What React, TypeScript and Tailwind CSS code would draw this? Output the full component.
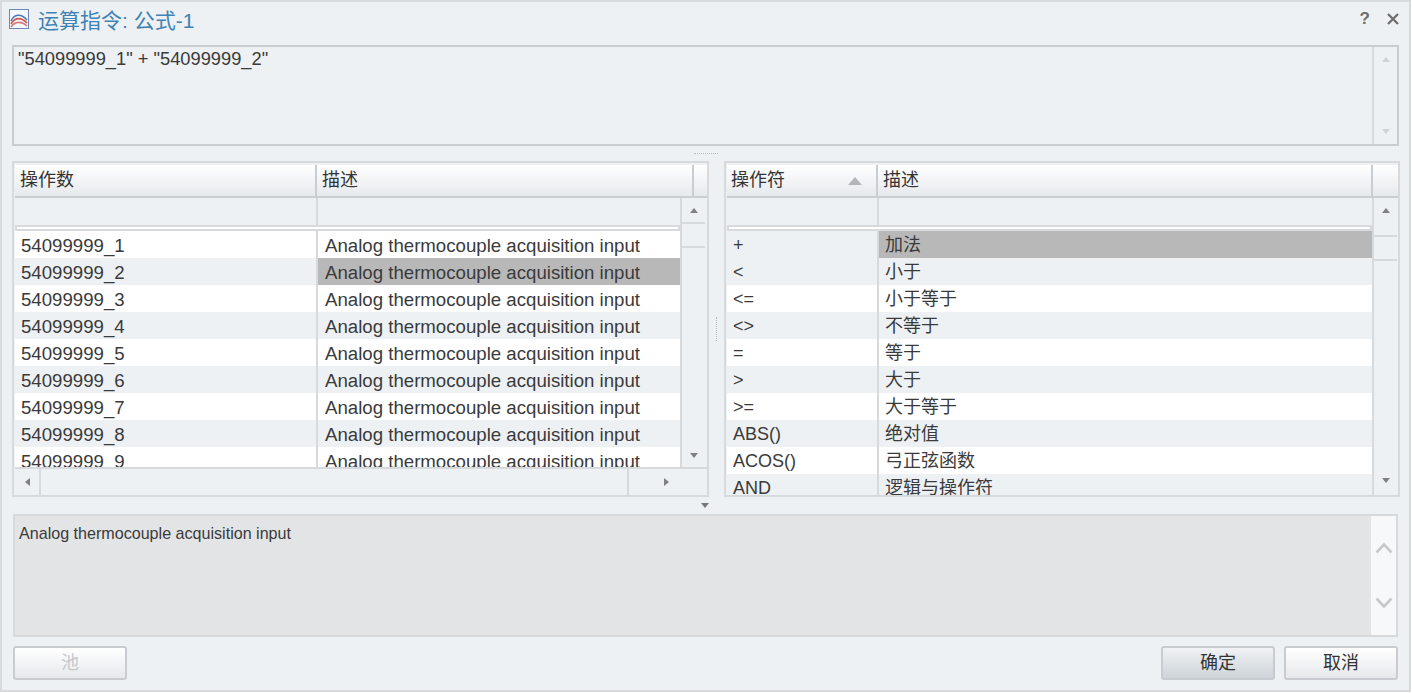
const SANS = "font-['Liberation_Sans','Noto_Sans_CJK_SC',sans-serif]";

function Tri({ dir, className }: { dir: "up" | "down" | "left" | "right"; className: string }) {
  const pts = { up: "0,6 5,0 10,6", down: "0,0 10,0 5,6", left: "6,0 6,10 0,5", right: "0,0 0,10 6,5" }[dir];
  const w = dir === "up" || dir === "down" ? 10 : 6;
  const h = dir === "up" || dir === "down" ? 6 : 10;
  return (
    <svg viewBox={`0 0 ${w} ${h}`} preserveAspectRatio="none" className={className}>
      <polygon points={pts} fill="currentColor" />
    </svg>
  );
}

function HeaderCell({ label, w, sort, pad = "pl-[5px]" }: { label?: string; w: string; sort?: boolean; pad?: string }) {
  return (
    <div className={`${w} h-full shrink-0 flex items-center justify-between ${pad} pr-[14px] border-r-2 border-[#c9ced3] text-[18px] text-[#333] bg-gradient-to-b from-white to-[#e6e9ed]`}>
      <span>{label}</span>
      {sort && <Tri dir="up" className="w-[14px] h-[8px] text-[#b4b7ba]" />}
    </div>
  );
}

function ScrollCol({ thumbTop, thumbH, downPad }: { thumbTop: string; thumbH: string; downPad: string }) {
  return (
    <div className="w-[25px] shrink-0 flex flex-col border-l-2 border-[#d6dadd]">
      <div className={`${thumbTop} flex items-start pt-[10px] justify-center border-b-2 border-[#d6dadd] shrink-0`}>
        <Tri dir="up" className="w-[8px] h-[5px] text-[#808080]" />
      </div>
      <div className={`${thumbH} border-b-2 border-[#d6dadd] shrink-0`} />
      <div className={`flex-1 flex items-end justify-center ${downPad}`}>
        <Tri dir="down" className="w-[8px] h-[5px] text-[#808080]" />
      </div>
    </div>
  );
}

function Row({ a, b, i, selected, col1, font, bPad }: { a: string; b: string; i: number; selected: boolean; col1: string; font: string; bPad: string }) {
  const base = i % 2 === 0 ? "bg-white" : "bg-[#edf1f4]";
  return (
    <div className={`flex h-[27px] shrink-0 text-[#3a3a3a] leading-[29px] ${font}`}>
      <div className={`${col1} shrink-0 whitespace-nowrap pl-[6px] ${selected ? "bg-[#edf1f4]" : base}`}>{a}</div>
      <div className="w-[2px] shrink-0 bg-[#d6dadd]" />
      <div className={`flex-1 whitespace-nowrap ${bPad} ${selected ? "bg-[#b8b8b8]" : base}`}>{b}</div>
    </div>
  );
}

const leftRows = [1, 2, 3, 4, 5, 6, 7, 8, 9].map((n) => `54099999_${n}`);
const rightRows = [
  ["+", "加法"], ["<", "小于"], ["<=", "小于等于"], ["<>", "不等于"], ["=", "等于"],
  [">", "大于"], [">=", "大于等于"], ["ABS()", "绝对值"], ["ACOS()", "弓正弦函数"], ["AND", "逻辑与操作符"],
];

function FilterRow({ col1 }: { col1: string }) {
  return (
    <>
      <div className="flex h-[27px] shrink-0">
        <div className={`${col1} shrink-0`} />
        <div className="w-[2px] shrink-0 bg-[#d6dadd]" />
        <div className="flex-1" />
      </div>
      <div className="h-[6px] shrink-0 bg-white border-y-2 border-x-2 border-[#d6dadd]" />
    </>
  );
}

function Btn({ label, className }: { label: string; className: string }) {
  return (
    <div className={`w-[114px] h-[34px] flex items-center justify-center rounded-[3px] border-2 border-[#c8ccd0] text-[18px] ${className}`}>
      {label}
    </div>
  );
}

export default function App() {
  return (
    <div className={`w-[1412px] h-[693px] overflow-hidden bg-white pr-[1px] pb-[1px] ${SANS}`}>
      <div className="w-full h-full bg-[#edf1f4] border-2 border-[#d7dbde] pl-[1px] flex flex-col">
        {/* Title bar */}
        <div className="h-[43px] shrink-0 flex items-center pl-[6px] pr-[6px] pb-[6px]">
          <svg viewBox="0 0 20 20" width="20" height="20" className="shrink-0 mb-[3px]">
            <rect x="0.5" y="0.5" width="19" height="19" fill="#f4f7fb" stroke="#6d86b4" />
            <path d="M2 12 C5 5 12 4 18 11" stroke="#4a78b8" strokeWidth="1.5" fill="none" />
            <path d="M2 15 C6 8 12 8 18 14" stroke="#d0524e" strokeWidth="1.6" fill="none" />
            <path d="M2 18 C6 12 13 12 18 17" stroke="#d67a78" strokeWidth="1.6" fill="none" />
          </svg>
          <span className="ml-[9px] text-[21px] text-[#3f82b5] whitespace-nowrap">运算指令: 公式-1</span>
          <span className="ml-auto text-[17px] font-bold text-[#6e6e6e] mb-[3px]">?</span>
          <svg viewBox="0 0 14 14" width="14" height="14" className="ml-[16px] mr-[3px] mb-[3px] text-[#707070]">
            <path d="M2 2 L12 12 M12 2 L2 12" stroke="currentColor" strokeWidth="2.4" />
          </svg>
        </div>

        {/* Expression editor */}
        <div className="ml-[9px] w-[1387px] h-[101px] shrink-0 flex border-2 border-[#c8cdd1]">
          <div className="flex-1 pl-[4px] text-[18.3px] text-[#3a3a3a] leading-[24px] whitespace-nowrap">
            "54099999_1" + "54099999_2"
          </div>
          <div className="w-[25px] flex flex-col items-center justify-between py-[10px] border-l-2 border-[#d6dadd]">
            <Tri dir="up" className="w-[8px] h-[5px] text-[#cfd3d6]" />
            <Tri dir="down" className="w-[8px] h-[5px] text-[#cfd3d6]" />
          </div>
        </div>

        {/* Horizontal splitter */}
        <div className="h-[15px] shrink-0 flex items-center justify-center">
          <div className="w-[24px] border-t border-dotted border-[#b5b9bc]" />
        </div>

        {/* Tables */}
        <div className="h-[336px] shrink-0 ml-[9px] flex">
          {/* Left panel */}
          <div className="w-[697px] shrink-0 flex flex-col border-2 border-[#d6dadd] pt-[2px] pl-[1px]">
            <div className="h-[33px] shrink-0 flex border-b-2 border-[#c9ced3]">
              <HeaderCell label="操作数" w="w-[302px]" />
              <HeaderCell label="描述" w="w-[377px]" />
              <div className="flex-1 bg-gradient-to-b from-white to-[#e6e9ed]" />
            </div>
            <div className="h-[271px] shrink-0 flex border-b-2 border-[#d6dadd]">
              <div className="w-[665px] shrink-0 flex flex-col overflow-hidden">
                <FilterRow col1="w-[301px]" />
                <div className="flex-1 flex flex-col overflow-hidden">
                  {leftRows.map((r, i) => (
                    <Row key={r} a={r} b="Analog thermocouple acquisition input" i={i} selected={i === 1} col1="w-[301px]" font="text-[18.65px]" bPad="pl-[7px]" />
                  ))}
                </div>
              </div>
              <ScrollCol thumbTop="h-[26px]" thumbH="h-[24px]" downPad="pb-[9px]" />
            </div>
            <div className="flex-1 flex text-[#808080]">
              <div className="w-[26px] flex items-center justify-center border-r-2 border-[#d6dadd]">
                <Tri dir="left" className="w-[5px] h-[8px]" />
              </div>
              <div className="w-[586px]" />
              <div className="w-[76px] flex items-center justify-center border-l-2 border-[#d6dadd]">
                <Tri dir="right" className="w-[5px] h-[8px]" />
              </div>
            </div>
          </div>

          {/* Vertical splitter */}
          <div className="w-[15px] shrink-0 flex items-center justify-center">
            <div className="h-[24px] border-l border-dotted border-[#b5b9bc]" />
          </div>

          {/* Right panel */}
          <div className="w-[676px] shrink-0 flex flex-col border-2 border-[#d6dadd] pt-[2px] pl-[1px]">
            <div className="h-[33px] shrink-0 flex border-b-2 border-[#c9ced3]">
              <HeaderCell label="操作符" w="w-[151px]" sort pad="pl-[4px]" />
              <HeaderCell label="描述" w="w-[495px]" />
              <div className="flex-1 bg-gradient-to-b from-white to-[#e6e9ed]" />
            </div>
            <div className="flex-1 flex min-h-0">
              <div className="w-[645px] shrink-0 flex flex-col overflow-hidden">
                <FilterRow col1="w-[150px]" />
                <div className="flex-1 flex flex-col overflow-hidden">
                  {rightRows.map(([a, b], i) => (
                    <Row key={a} a={a} b={b} i={i} selected={i === 0} col1="w-[150px]" font="text-[18px]" bPad="pl-[6px]" />
                  ))}
                </div>
              </div>
              <ScrollCol thumbTop="h-[39px]" thumbH="h-[24px]" downPad="pb-[12px]" />
            </div>
          </div>
        </div>

        {/* Splitter arrow */}
        <div className="h-[17px] shrink-0 pl-[698px] flex items-center">
          <Tri dir="down" className="w-[8px] h-[5px] text-[#777]" />
        </div>

        {/* Description */}
        <div className="ml-[10px] w-[1385px] h-[123px] shrink-0 flex border-2 border-[#d6dadd] bg-[#e3e4e6]">
          <div className="flex-1 pl-[4px] pt-[6px] text-[16.1px] text-[#3a3a3a] leading-[22px] whitespace-nowrap">
            Analog thermocouple acquisition input
          </div>
          <div className="w-[25px] bg-[#f7f8f9] flex flex-col items-center justify-between pt-[26px] pb-[26px]">
            <svg viewBox="0 0 18 12" width="18" height="12" className="text-[#c8c9ca]">
              <path d="M1.5 10.5 L9 2.5 L16.5 10.5" stroke="currentColor" strokeWidth="2.6" fill="none" />
            </svg>
            <svg viewBox="0 0 18 12" width="18" height="12" className="text-[#c8c9ca]">
              <path d="M1.5 1.5 L9 9.5 L16.5 1.5" stroke="currentColor" strokeWidth="2.6" fill="none" />
            </svg>
          </div>
        </div>

        {/* Buttons */}
        <div className="mt-[9px] ml-[10px] w-[1385px] flex items-start">
          <Btn label="池" className="text-[#c4c8cb] bg-gradient-to-b from-white to-[#e6e9ec]" />
          <Btn label="确定" className="ml-auto text-[#333] bg-gradient-to-b from-[#f1f3f5] to-[#cdd3d8]" />
          <Btn label="取消" className="ml-[9px] text-[#333] bg-gradient-to-b from-white to-[#e6e8eb]" />
        </div>
      </div>
    </div>
  );
}
